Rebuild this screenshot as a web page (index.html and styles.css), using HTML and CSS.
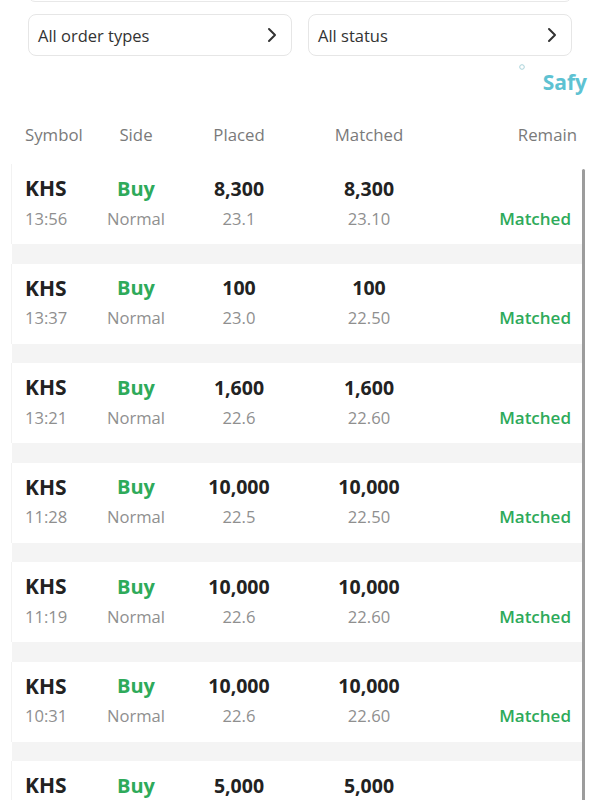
FILE: index.html
```html
<!DOCTYPE html>
<html>
<head>
<meta charset="utf-8">
<link rel="stylesheet" href="styles.css">
</head>
<body>
<div class="topbox"></div>
<div class="filters">
  <div class="filter"><span>All order types</span>
    <svg class="chev" width="12" height="16" viewBox="0 0 12 16"><path d="M3 2 L9 8 L3 14" fill="none" stroke="#333" stroke-width="2" stroke-linecap="round" stroke-linejoin="round"/></svg>
  </div>
  <div class="filter"><span>All status</span>
    <svg class="chev" width="12" height="16" viewBox="0 0 12 16"><path d="M3 2 L9 8 L3 14" fill="none" stroke="#333" stroke-width="2" stroke-linecap="round" stroke-linejoin="round"/></svg>
  </div>
</div>
<div class="brand">
  <svg class="dot" width="8" height="8" viewBox="0 0 8 8"><circle cx="4" cy="4" r="2.3" fill="none" stroke="#a9d3da" stroke-width="1"/></svg>
  <span class="safy">Safy</span>
</div>
<div class="head">
  <div>Symbol</div><div class="c">Side</div><div class="c">Placed</div><div class="c">Matched</div><div class="r">Remain</div>
</div>
<div class="listwrap">
  <div class="list">
    <div class="row">
      <div class="sym">KHS</div><div class="c buy">Buy</div><div class="c num">8,300</div><div class="c num">8,300</div><div></div>
      <div class="sub">13:56</div><div class="c sub">Normal</div><div class="c sub">23.1</div><div class="c sub">23.10</div><div class="r status">Matched</div>
    </div>
    <div class="gap"></div>
    <div class="row">
      <div class="sym">KHS</div><div class="c buy">Buy</div><div class="c num">100</div><div class="c num">100</div><div></div>
      <div class="sub">13:37</div><div class="c sub">Normal</div><div class="c sub">23.0</div><div class="c sub">22.50</div><div class="r status">Matched</div>
    </div>
    <div class="gap"></div>
    <div class="row">
      <div class="sym">KHS</div><div class="c buy">Buy</div><div class="c num">1,600</div><div class="c num">1,600</div><div></div>
      <div class="sub">13:21</div><div class="c sub">Normal</div><div class="c sub">22.6</div><div class="c sub">22.60</div><div class="r status">Matched</div>
    </div>
    <div class="gap"></div>
    <div class="row">
      <div class="sym">KHS</div><div class="c buy">Buy</div><div class="c num">10,000</div><div class="c num">10,000</div><div></div>
      <div class="sub">11:28</div><div class="c sub">Normal</div><div class="c sub">22.5</div><div class="c sub">22.50</div><div class="r status">Matched</div>
    </div>
    <div class="gap"></div>
    <div class="row">
      <div class="sym">KHS</div><div class="c buy">Buy</div><div class="c num">10,000</div><div class="c num">10,000</div><div></div>
      <div class="sub">11:19</div><div class="c sub">Normal</div><div class="c sub">22.6</div><div class="c sub">22.60</div><div class="r status">Matched</div>
    </div>
    <div class="gap"></div>
    <div class="row">
      <div class="sym">KHS</div><div class="c buy">Buy</div><div class="c num">10,000</div><div class="c num">10,000</div><div></div>
      <div class="sub">10:31</div><div class="c sub">Normal</div><div class="c sub">22.6</div><div class="c sub">22.60</div><div class="r status">Matched</div>
    </div>
    <div class="gap"></div>
    <div class="row last">
      <div class="sym">KHS</div><div class="c buy">Buy</div><div class="c num">5,000</div><div class="c num">5,000</div><div></div>
    </div>
  </div>
  <div class="scroll"></div>
</div>
</body>
</html>
```

FILE: styles.css
```css
html, body {
  margin: 0;
  padding: 0;
  background: #fff;
  font-family: "Open Sans", "Noto Sans", sans-serif;
  color: #333;
  overflow: hidden;
  height: 800px;
}
.topbox {
  height: 12px;
  margin: -12px 28px 0 28px;
  border: 1px solid #e8e8e8;
  border-radius: 8px;
}
.filters {
  display: flex;
  gap: 16px;
  margin: 12px 28px 0 28px;
}
.filter {
  flex: 1;
  height: 40px;
  border: 1px solid #e6e6e6;
  border-radius: 8px;
  display: flex;
  align-items: center;
  justify-content: space-between;
  padding: 0 13px 0 9px;
  font-size: 16.5px;
  color: #333;
}
.chev { display: block; }
.brand {
  display: flex;
  justify-content: flex-end;
  align-items: flex-start;
  height: 50px;
  padding-right: 13px;
  margin-top: 4px;
}
.dot { margin-top: 3px; margin-right: 17px; }
.safy {
  font-size: 21px;
  font-weight: 700;
  color: #5ec2d2;
  line-height: 34px;
  margin-top: 5px;
}
.head {
  display: grid;
  grid-template-columns: 71px 80px 126px 134px 1fr;
  padding: 0 23px 0 25px;
  height: 50px;
  align-items: center;
  font-size: 16.8px;
  color: #7a7a7a;
  margin-top: -1px;
}
.c { text-align: center; }
.r { text-align: right; }
.listwrap {
  display: flex;
  margin-left: 12px;
  margin-top: 5px;
}
.list {
  width: 570px;
}
.scroll {
  width: 3px;
  margin-top: 5px;
  height: 700px;
  background: #9c9c9c;
  border-radius: 2px;
}
.row {
  display: grid;
  grid-template-columns: 71px 80px 126px 134px 1fr;
  grid-template-rows: 26px 34px;
  align-items: center;
  height: 80px;
  box-sizing: border-box;
  padding: 11px 11px 9px 13px;
  background: #fff;
  border-left: 1px solid #f2f2f2;
  margin-left: -1px;
}
.gap {
  height: 19.5px;
  background: #f4f4f4;
}
.sym {
  font-size: 21px;
  font-weight: 700;
  color: #222;
}
.buy {
  font-size: 20px;
  font-weight: 700;
  color: #2eaa5a;
}
.num {
  font-size: 19.5px;
  font-weight: 700;
  color: #222;
}
.sub {
  font-size: 16.6px;
  color: #8f8f8f;
}
.status {
  font-size: 17px;
  font-weight: 600;
  color: #2eaa5a;
}
```
